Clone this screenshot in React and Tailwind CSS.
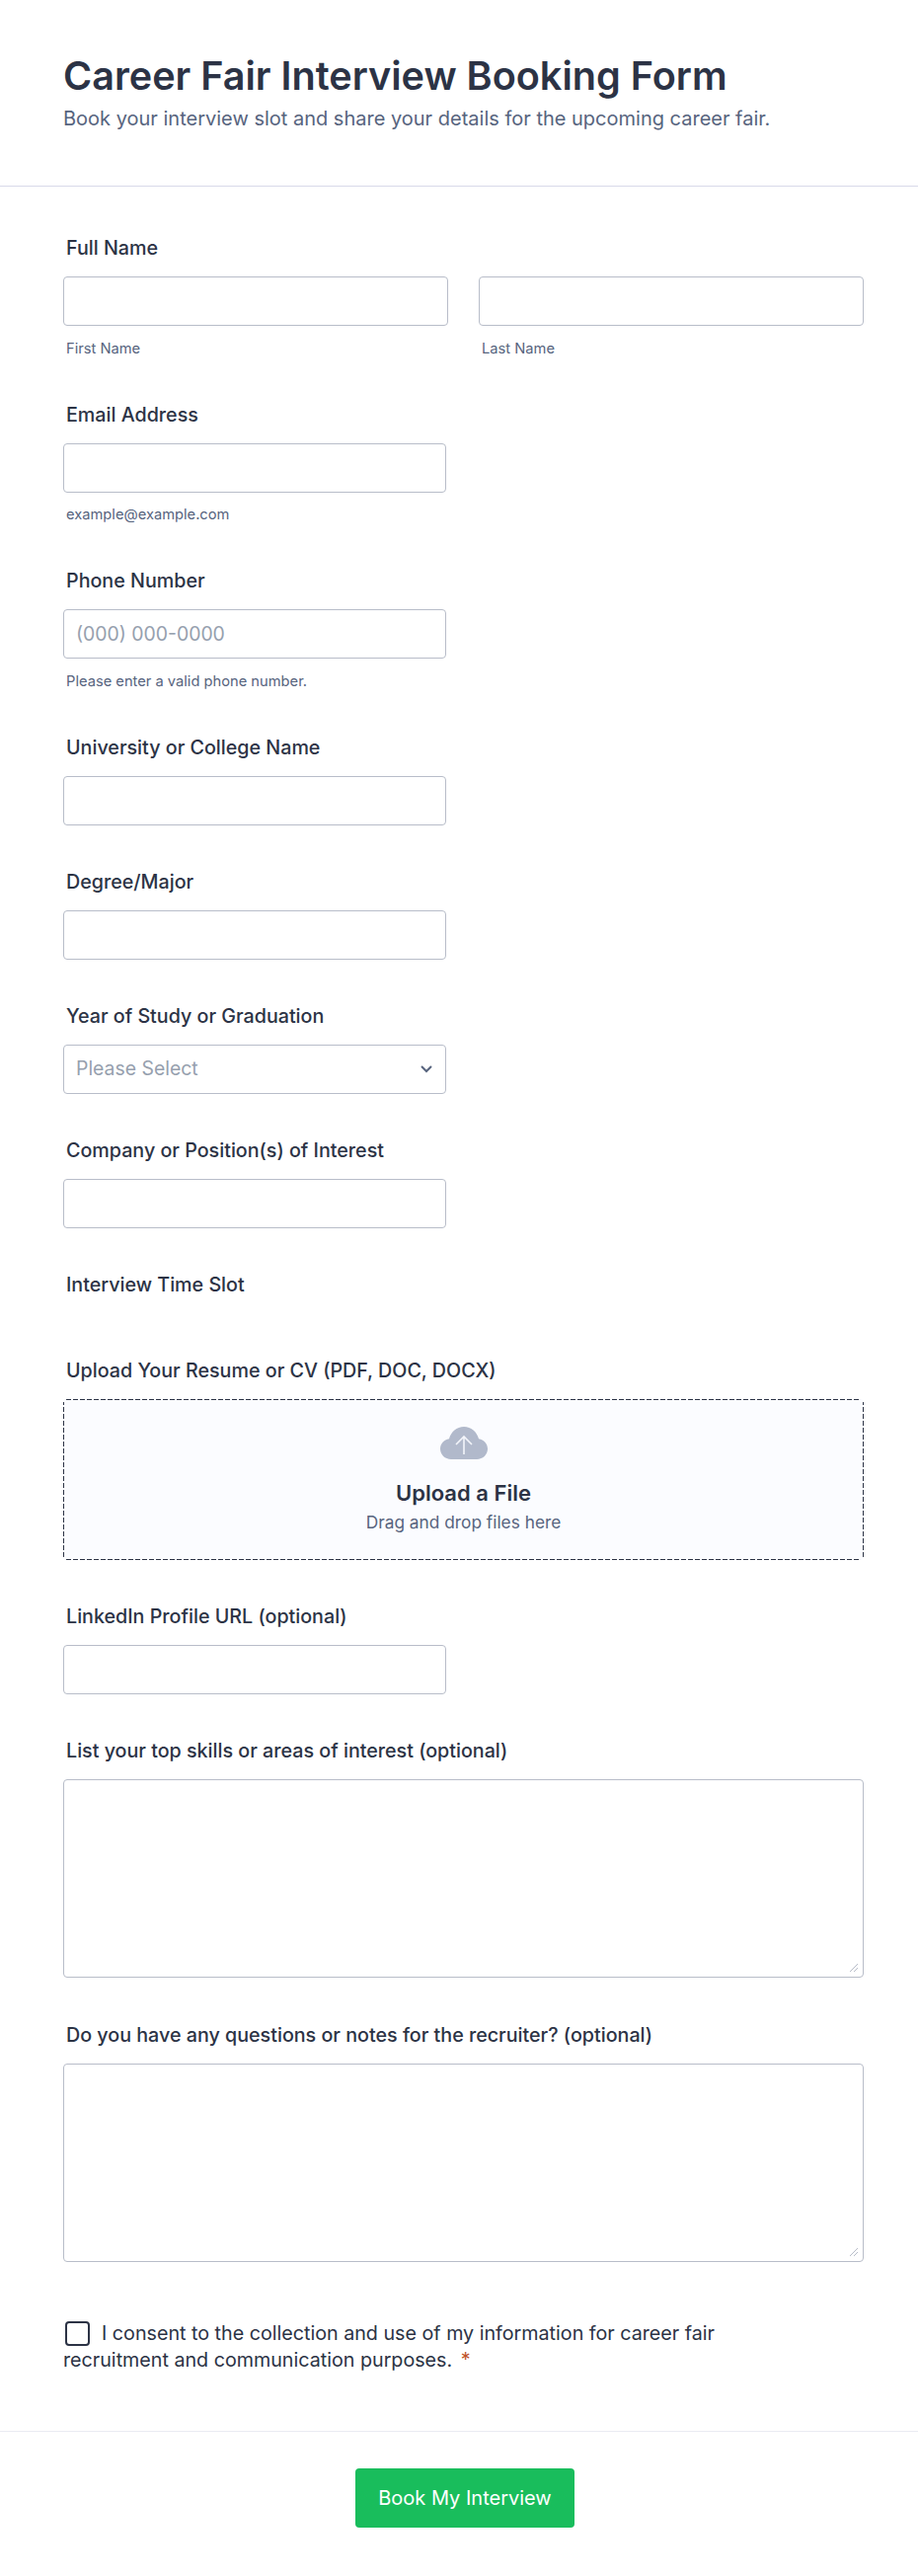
import React from "react";

const inputCls =
  "block w-full h-[50px] rounded-[4px] border border-[#b8bdc9] bg-white px-3 text-[19.4px] text-[#2c3345] placeholder:text-[#96a0ae] outline-none";

const labelCls =
  "block px-[3px] text-[19.7px] leading-[28px] font-[450] text-[#2c3345]";

const Label = ({ children }) => (
  <label className={labelCls + " mb-[15px]"}>{children}</label>
);

const Sub = ({ children }) => (
  <p className="mt-[13.5px] mb-[-0.5px] px-[3px] text-[14.7px] leading-[19.5px] text-[#57647e]">
    {children}
  </p>
);

const Field = ({ label, sub, placeholder }) => (
  <div className="mb-[43px]">
    <Label>{label}</Label>
    <div className="w-[388px]">
      <input type="text" placeholder={placeholder} className={inputCls} />
    </div>
    {sub && <Sub>{sub}</Sub>}
  </div>
);

const AreaField = ({ label, className }) => (
  <div className={className}>
    <Label>{label}</Label>
    <div className="relative">
      <textarea className="block w-full h-[201px] resize-none rounded-[4px] border border-[#b8bdc9] bg-white p-3 outline-none"></textarea>
      <svg
        viewBox="0 0 8 8"
        className="absolute bottom-[6px] right-[6px] h-[8px] w-[8px] fill-none stroke-[#b8bdc9]">
        <path d="M0 8 8 0M4 8l4-4" />
      </svg>
    </div>
  </div>
);

export default function App() {
  return (
    <div
      className="min-h-screen bg-white"
      style={{ fontFamily: "Inter, 'Noto Sans', sans-serif" }}>
      <header className="h-[189px] border-b border-[#d8dae9] pl-16 pr-[55px] pt-[52px]">
        <h1 className="text-[39.6px] leading-[50px] font-semibold text-[#2c3345]">
          Career Fair Interview Booking Form
        </h1>
        <p className="mt-[3px] text-[20px] leading-[30px] text-[#57647e]">
          Book your interview slot and share your details for the upcoming career fair.
        </p>
      </header>

      <main className="pl-16 pr-[55px] pt-[48px]">
        <div className="mb-[43px]">
          <Label>Full Name</Label>
          <div className="grid grid-cols-2 gap-[31px]">
            <div>
              <input type="text" className={inputCls} />
              <Sub>First Name</Sub>
            </div>
            <div>
              <input type="text" className={inputCls} />
              <Sub>Last Name</Sub>
            </div>
          </div>
        </div>

        <Field label="Email Address" sub="example@example.com" />
        <Field
          label="Phone Number"
          placeholder="(000) 000-0000"
          sub="Please enter a valid phone number."
        />
        <Field label="University or College Name" />
        <Field label="Degree/Major" />

        <div className="mb-[43px]">
          <Label>Year of Study or Graduation</Label>
          <div className="relative w-[388px]">
            <select className={inputCls + " appearance-none text-[#96a0ae]"}>
              <option>Please Select</option>
            </select>
            <svg
              viewBox="0 0 14 9"
              className="absolute right-[13px] top-[20px] h-[9px] w-[14px] fill-none stroke-[#57647e] stroke-2">
              <path d="M2 2l5 5 5-5" />
            </svg>
          </div>
        </div>

        <Field label="Company or Position(s) of Interest" />

        <div className="mb-[59px]">
          <label className={labelCls}>Interview Time Slot</label>
        </div>

        <div className="mb-[43px]">
          <Label>Upload Your Resume or CV (PDF, DOC, DOCX)</Label>
          <div className="flex h-[163px] flex-col items-center rounded-[4px] pt-[28px] [background:repeating-linear-gradient(90deg,#2c3345_0_5px,transparent_5px_7px)_center_top/calc(100%-6px)_1px_no-repeat,repeating-linear-gradient(90deg,#2c3345_0_5px,transparent_5px_7px)_center_bottom/calc(100%-6px)_1px_no-repeat,repeating-linear-gradient(0deg,#2c3345_0_5px,transparent_5px_7px)_left_center/1px_calc(100%-6px)_no-repeat,repeating-linear-gradient(0deg,#2c3345_0_5px,transparent_5px_7px)_right_center/1px_calc(100%-6px)_no-repeat,#fbfcff]">
            <svg viewBox="0 0 48 33" className="h-[33px] w-[48px]">
              <path
                fill="#b1b9cb"
                d="M11 33C4.900 33 0 28.400 0 22.600c0-5.200 3.800-9.400 9-10.300C10.700 5.200 16.800 0 24 0s13.300 5.200 15 12.300c5.200.9 9 5.100 9 10.300C48 28.400 43.100 33 37 33H11z"
              />
              <path
                d="M24 28V10M16 18l8-8 8 8"
                fill="none"
                stroke="#f3f5fa"
                strokeWidth="1.6"
              />
            </svg>
            <p className="mt-[18px] text-[22px] leading-[32px] font-semibold text-[#2c3345]">
              Upload a File
            </p>
            <p className="mt-[1px] text-[17.3px] leading-[26px] text-[#57647e]">
              Drag and drop files here
            </p>
          </div>
        </div>

        <Field label="LinkedIn Profile URL (optional)" />
        <AreaField
          className="mb-[44.5px]"
          label="List your top skills or areas of interest (optional)"
        />
        <AreaField
          className="mb-[59px]"
          label="Do you have any questions or notes for the recruiter? (optional)"
        />

        <div className="w-[700px] text-[19.7px] leading-[27px] text-[#2c3345]">
          <input
            type="checkbox"
            className="ml-[2px] mr-[12px] inline-block h-[25px] w-[25px] appearance-none rounded-[4px] border-2 border-[#2c3345] bg-white align-[-6px]"
          />
          I consent to the collection and use of my information for career fair recruitment and communication purposes.{" "}
          <span className="ml-[3px] text-[#c0532b]">*</span>
        </div>
      </main>

      <footer className="mt-[58px] flex justify-center border-t border-[#eaebf2] pl-[12px] pt-[37px] pb-[49px]">
        <button className="h-[60px] w-[222px] rounded-[4px] bg-[#19bd5c] text-[20px] font-normal text-white">
          Book My Interview
        </button>
      </footer>
    </div>
  );
}
